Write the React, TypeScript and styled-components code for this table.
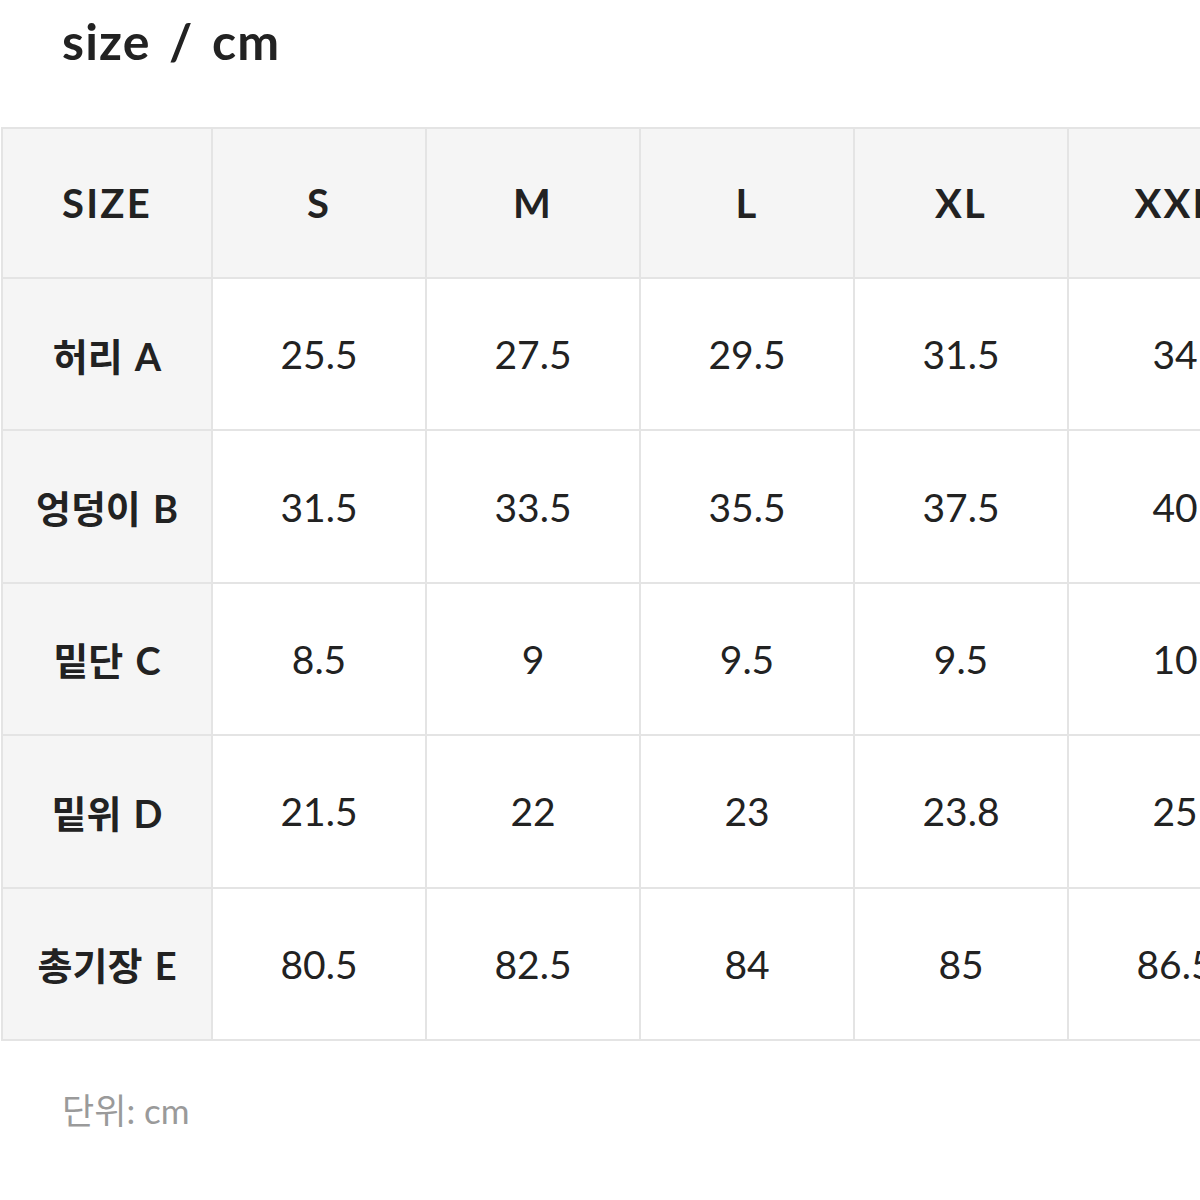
import React from "react";
import styled, { createGlobalStyle } from "styled-components";

const Global = createGlobalStyle`
  html, body { margin: 0; padding: 0; background: #fff; overflow: hidden; }
  body { font-family: Lato, "Noto Sans CJK KR", sans-serif; color: #222; }
`;

const Page = styled.div`
  width: 1200px;
  height: 1200px;
  overflow: hidden;
  display: flex;
  flex-direction: column;
`;

const Title = styled.h1`
  margin: 0;
  padding: 11px 0 0 62px;
  height: 112px;
  box-sizing: border-box;
  font-family: Lato, "Noto Sans CJK KR", sans-serif;
  font-weight: 700;
  font-size: 50px;
  letter-spacing: 1.2px;
  word-spacing: 5px;
  line-height: 60px;
  color: #222;
`;

const Table = styled.table`
  border-collapse: collapse;
  table-layout: fixed;
  width: 1282px;
  margin-left: 1px;
  margin-top: 15px;
`;

const Col = styled.col<{ $w: number }>`
  width: ${(p) => p.$w}px;
`;

const Cell = styled.td<{ $head?: boolean; $top?: boolean }>`
  border: 2px solid #e4e4e4;
  height: ${(p) => (p.$top ? 148 : 150.4)}px;
  padding: 0;
  text-align: center;
  vertical-align: middle;
  background: ${(p) => (p.$head ? "#f5f5f5" : "#fff")};
  font-family: Lato, "Noto Sans CJK KR", sans-serif;
  font-weight: ${(p) => (p.$head ? 700 : 400)};
  font-size: 39px;
  word-spacing: 1px;
  color: #222;
  white-space: nowrap;
  overflow: hidden;
`;

const HeadText = styled.span`
  font-size: 40px;
  letter-spacing: 2.2px;
`;

const Label = styled.span`
  font-size: 38px;
  word-spacing: 3px;
`;

const Note = styled.p`
  margin: 0;
  padding: 42px 0 0 62px;
  font-family: Lato, "Noto Sans CJK KR", sans-serif;
  font-size: 35px;
  color: #9a9a9a;
`;

const sizes = ["S", "M", "L", "XL", "XXL"];
const colWidths = [210, 214, 214, 214, 214, 214];
const rows: [string, string[]][] = [
  ["허리 A", ["25.5", "27.5", "29.5", "31.5", "34"]],
  ["엉덩이 B", ["31.5", "33.5", "35.5", "37.5", "40"]],
  ["밑단 C", ["8.5", "9", "9.5", "9.5", "10"]],
  ["밑위 D", ["21.5", "22", "23", "23.8", "25"]],
  ["총기장 E", ["80.5", "82.5", "84", "85", "86.5"]],
];

export default function App() {
  return (
    <Page>
      <Global />
      <Title>size / cm</Title>
      <Table>
        <colgroup>
          {colWidths.map((w, i) => (
            <Col key={i} $w={w} />
          ))}
        </colgroup>
        <tbody>
          <tr>
            <Cell $head $top>
              <HeadText>SIZE</HeadText>
            </Cell>
            {sizes.map((s) => (
              <Cell $head $top key={s}>
                <HeadText>{s}</HeadText>
              </Cell>
            ))}
          </tr>
          {rows.map(([label, vals]) => (
            <tr key={label}>
              <Cell $head>
                <Label>{label}</Label>
              </Cell>
              {vals.map((v, i) => (
                <Cell key={i}>{v}</Cell>
              ))}
            </tr>
          ))}
        </tbody>
      </Table>
      <Note>단위: cm</Note>
    </Page>
  );
}
